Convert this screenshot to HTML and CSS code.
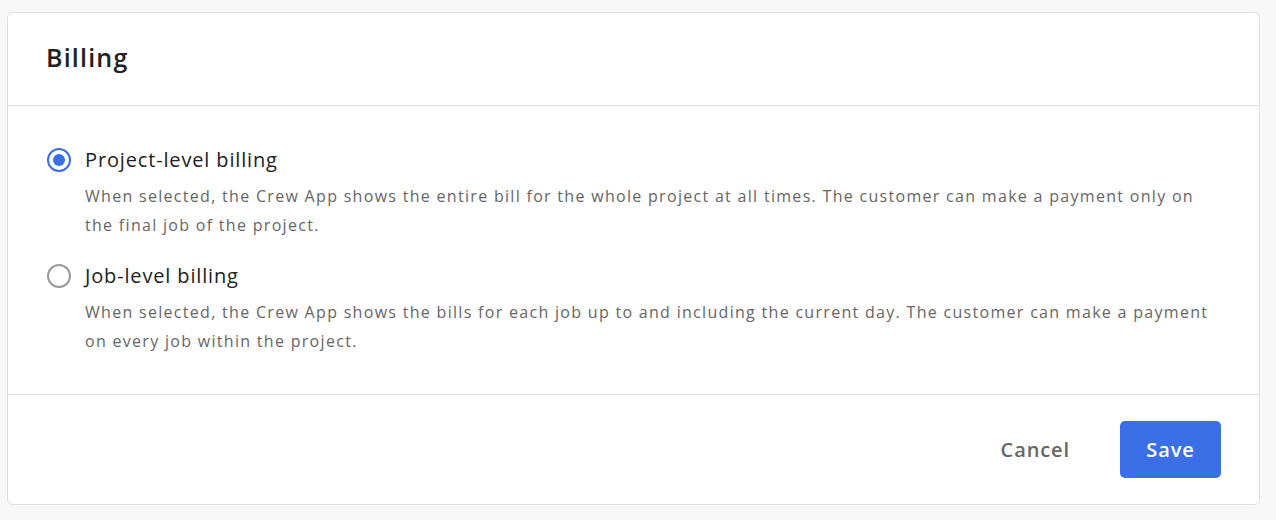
FILE: index.html
```html
<!DOCTYPE html>
<html lang="en">
<head>
    <meta charset="UTF-8">
    <meta name="viewport" content="width=device-width, initial-scale=1.0">
    <title>Billing</title>
    <link rel="stylesheet" href="styles.css">
</head>
<body>
    <div class="card">
        <div class="card-header">
            <h1>Billing</h1>
        </div>

        <!-- Opciones de facturación -->
        <div class="card-body">
            <label class="option">
                <input type="radio" name="billing" value="project" checked>
                <span class="radio"></span>
                <span class="option-text">
                    <span class="option-title">Project-level billing</span>
                    <span class="option-desc">When selected, the Crew App shows the entire bill for the whole project at all times. The customer can make a payment only on the final job of the project.</span>
                </span>
            </label>
            <label class="option">
                <input type="radio" name="billing" value="job">
                <span class="radio"></span>
                <span class="option-text">
                    <span class="option-title">Job-level billing</span>
                    <span class="option-desc">When selected, the Crew App shows the bills for each job up to and including the current day. The customer can make a payment on every job within the project.</span>
                </span>
            </label>
        </div>

        <div class="card-footer">
            <button type="button" class="btn-cancel">Cancel</button>
            <button type="button" class="btn-save">Save</button>
        </div>
    </div>
</body>
</html>
```

FILE: styles.css
```css
body {
    font-family: "Open Sans", Lato, sans-serif;
    margin: 0;
    padding: 12px 16px 0 7px;
    background-color: #f8f8f8;
    color: #222222;
}

.card {
    background-color: #ffffff;
    border: 1px solid #e0e0e0;
    border-radius: 6px;
}

.card-header {
    height: 93px;
    box-sizing: border-box;
    padding: 0 38px 4px 38px;
    display: flex;
    align-items: center;
    border-bottom: 1px solid #e0e0e0;
}

h1 {
    margin: 0;
    font-size: 25px;
    font-weight: 600;
    letter-spacing: 1.2px;
    color: #222222;
}

.card-body {
    height: 289px;
    box-sizing: border-box;
    padding: 42px 40px 0 39px;
    border-bottom: 1px solid #e0e0e0;
}

.option {
    display: flex;
    gap: 14px;
    margin-bottom: 24px;
    cursor: pointer;
}

.option input {
    display: none;
}

.radio {
    flex: none;
    width: 24px;
    height: 24px;
    box-sizing: border-box;
    border: 2px solid #9a9a9a;
    border-radius: 50%;
    position: relative;
}

.option input:checked + .radio {
    border-color: #3b6fe6;
}

.option input:checked + .radio::after {
    content: "";
    position: absolute;
    top: 4px;
    left: 4px;
    width: 12px;
    height: 12px;
    border-radius: 50%;
    background-color: #3b6fe6;
}

.option-text {
    display: flex;
    flex-direction: column;
    max-width: 1136px;
}

.option-title {
    font-size: 20px;
    line-height: 24px;
    letter-spacing: 0.85px;
    color: #222222;
}

.option-desc {
    margin-top: 10px;
    font-size: 16px;
    line-height: 29px;
    letter-spacing: 1.3px;
    color: #666666;
}

.card-footer {
    height: 109px;
    box-sizing: border-box;
    padding: 0 38px;
    display: flex;
    justify-content: flex-end;
    align-items: center;
    gap: 50px;
}

button {
    font-family: inherit;
    font-size: 20px;
    font-weight: 600;
    letter-spacing: 0.9px;
    border: none;
    cursor: pointer;
}

.btn-cancel {
    background: none;
    color: #666666;
    padding: 0;
}

.btn-save {
    width: 101px;
    height: 57px;
    border-radius: 5px;
    background-color: #3b6fe6;
    color: #ffffff;
}

.btn-save:hover {
    background-color: #2f5fcc;
}
```
